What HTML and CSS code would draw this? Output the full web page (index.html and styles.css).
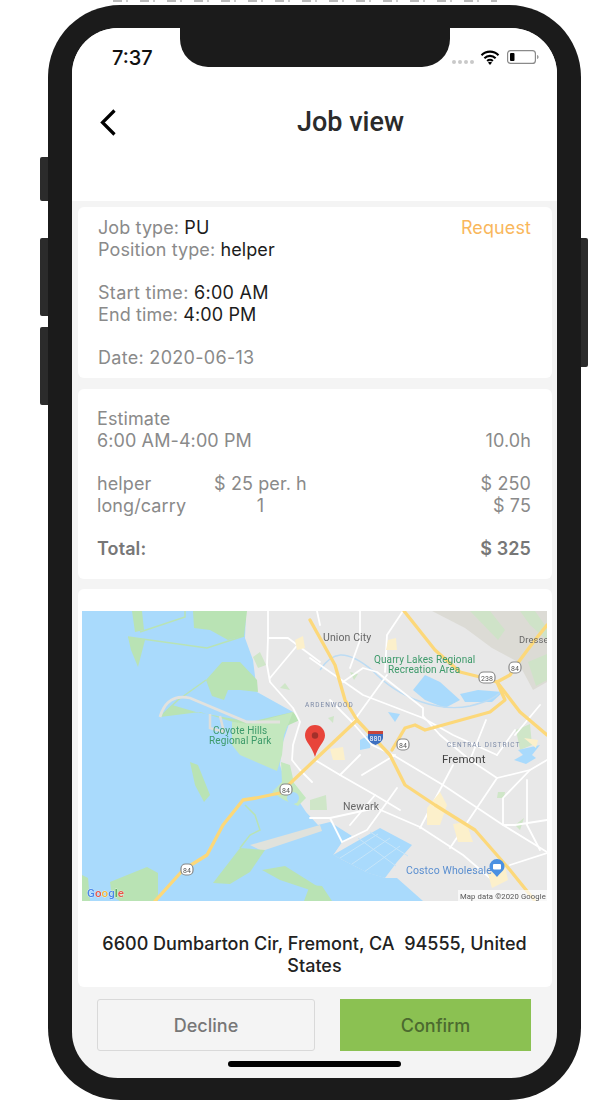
FILE: index.html
```html
<!DOCTYPE html>
<html lang="en">
<head>
<meta charset="utf-8">
<title>Job view</title>
<link rel="stylesheet" href="styles.css">
</head>
<body>
<div class="strip"></div>
<div class="device">
  <span class="side side-mute"></span>
  <span class="side side-up"></span>
  <span class="side side-down"></span>
  <span class="side side-power"></span>
  <div class="notch"></div>
  <div class="screen">
    <header class="top">
      <div class="status">
        <span class="time">7:37</span>
        <div class="status-icons">
          <span class="dots"><i></i><i></i><i></i><i></i></span>
          <svg class="wifi" width="20" height="15" viewBox="0 0 20 15"><path d="M1.500 5.200a12 12 0 0 1 17 0M4.400 8.200a8 8 0 0 1 11.200 0M7.200 11a4 4 0 0 1 5.600 0" fill="none" stroke="#000" stroke-width="2.100"/><path d="M10 15l-2-2.400a3 3 0 0 1 4 0z" fill="#000"/></svg>
          <svg class="battery" width="32" height="14" viewBox="0 0 32 14"><rect x=".6" y=".6" width="27.800" height="12.800" rx="3" fill="none" stroke="#8a8a8a" stroke-width="1.200"/><rect x="3" y="3" width="4.500" height="8" rx="1" fill="#000"/><path d="M30 5v4c1-.3 1.600-1 1.600-2s-.6-1.700-1.600-2z" fill="#999"/></svg>
        </div>
      </div>
      <div class="nav">
        <svg class="back" width="16" height="27" viewBox="0 0 16 27"><path d="M14.500 1.500L2.500 13.500l12 12" fill="none" stroke="#000" stroke-width="3.200"/></svg>
        <h1 class="title">Job view</h1>
      </div>
    </header>

    <section class="card card-job">
      <div class="job-head">
        <div class="lines">
          <div>Job type: <b>PU</b></div>
          <div>Position type: <b>helper</b></div>
        </div>
        <span class="state">Request</span>
      </div>
      <div class="lines">
        <div class="wide">Start time: <b>6:00 AM</b></div>
        <div>End time: <b>4:00 PM</b></div>
      </div>
      <div class="lines">
        <div class="wide">Date: 2020-06-13</div>
      </div>
    </section>

    <section class="card card-est">
      <div class="lines">Estimate</div>
      <div class="row row-mb"><span>6:00 AM-4:00 PM</span><span>10.0h</span></div>
      <div class="grid"><span>helper</span><span class="mid">$ 25 per. h</span><span class="end">$ 250</span></div>
      <div class="grid grid-mb"><span>long/carry</span><span class="mid">1</span><span class="end">$ 75</span></div>
      <div class="row total"><span>Total:</span><span>$ 325</span></div>
    </section>

    <section class="card card-map">
      <svg class="map" width="465" height="290" viewBox="82 611 465 290" font-family="Roboto, sans-serif">
        <rect x="82" y="611" width="465" height="290" fill="#a9dafc"/>
        <!-- land -->
        <path d="M246 611H547V901H423L397 878 385 878 368 873 333 855 342 842 352 836 330 822 318 825 306 812 298 800 288 790 280 765 282 745 293 712 257 692 253 660 245 638Z" fill="#e8e8e8"/>
        <path d="M250 845L320 825 322 831 262 851Z" fill="#e0e2dc"/>
        <!-- salt ponds -->
        <path d="M333 855L380 828 412 845 397 862 385 878 368 873Z" fill="#a9dafc"/>
        <path d="M340 858L378 834M352 864L390 838M364 872L400 846M358 838L396 866M370 832L408 856" stroke="#c6e5f9" stroke-width="1" fill="none"/>
        <path d="M310 840L330 838 342 842 333 855 345 862 368 873 385 878 340 880 310 878Z" fill="#a9dafc"/>
        <path d="M310 885L322 886 332 901H304Z" fill="#b9e3b4"/>
        <!-- hills -->
        <path d="M432 611H547V682L533 690 518 662 492 648 465 628Z" fill="#dcdbd5"/>
        <path d="M470 611H490L505 630 498 640ZM520 611H535L547 628V640L530 625ZM528 662L547 654V680L536 686Z" fill="#cfe3c8"/>
        <!-- marsh -->
        <g fill="#b9e3b4">
          <path d="M132 611H142L144 630 135 632Z"/>
          <path d="M128 637L145 640 138 667 131 650Z"/>
          <path d="M193 611H247L244 636 228 640 210 630 194 628Z"/>
          <path d="M206 680L222 662 240 662 257 680 258 692 240 690 228 690 224 700 212 696Z"/>
          <path d="M160 717L172 705 196 712 250 722 293 712 300 720 282 728 240 724 200 712Z"/>
          <path d="M190 762L198 765 210 795 204 802 195 785Z"/>
          <path d="M110 882L147 867 158 873V901H120L112 896Z"/>
          <path d="M82 875L88 878 90 901H82Z"/>
          <path d="M213 883L240 848 265 850 250 872 230 884Z"/>
          <path d="M262 870L285 866 320 888 316 892 280 880Z"/>
        </g>
        <g fill="none" stroke="#b9e3b4" stroke-width="1.500">
          <path d="M140 632L185 617V611M128 637L207 648 244 636"/>
          <path d="M206 680L178 700 160 717"/>
          <path d="M240 848L250 835 260 830 255 815 245 805"/>
        </g>
        <path d="M232 722L250 724 293 712 284 735 282 755 277 771 240 755 232 745Z" fill="#c4e8bf"/>
        <path d="M160 717C165 700 175 695 190 698L247 722 280 722" fill="none" stroke="#e2e2de" stroke-width="2.800"/>
        <path d="M210 714V728L224 732 220 716" fill="none" stroke="#dededa" stroke-width="2.500"/>
        <path d="M281 762L290 765 294 783 306 798 298 806 284 800 272 792 282 782Z" fill="#c4e8bf"/>
        <circle cx="293" cy="798" r="6" fill="#a9dafc"/>
        <!-- land parks -->
        <g fill="#cfe6c8">
          <path d="M253 657L260 652 266 665 258 668Z"/>
          <path d="M280 688L285 683 290 690Z"/>
          <path d="M310 800L326 795 327 810 310 810Z"/>
          <path d="M328 718L334 716 333 723Z"/>
          <path d="M350 672L358 674 354 680Z"/>
          <path d="M515 825L524 818 520 830ZM498 792L505 792 504 798 497 798Z"/>
          <path d="M516 730L530 724 532 745 520 750Z"/>
        </g>
        <!-- lakes -->
        <g fill="#a9dafc">
          <path d="M413 690L425 675 440 682 460 700 445 708 425 700Z"/>
          <path d="M460 694L478 690 503 692 492 702 465 702Z"/>
          <path d="M518 750L540 745 528 760Z"/>
          <path d="M360 740L372 733 370 748 360 750Z"/>
          <path d="M388 712L400 714 395 722Z"/>
          <path d="M514 760L528 752 536 758 526 764Z"/>
        </g>
        <!-- water lines -->
        <path d="M320 670C332 652 345 648 372 670 400 700 440 712 470 706 486 702 496 698 502 690" fill="none" stroke="#bcdcf4" stroke-width="1.400"/>
        <!-- white roads -->
        <g fill="none" stroke="#fff" stroke-width="1.800" stroke-linecap="round" stroke-linejoin="round">
          <path d="M268 611V638L267 665 270 682 293 708 300 722 293 745 292 760 300 770 312 782"/>
          <path d="M300 642L270 678M268 638H288L320 662"/>
          <path d="M310 658L363 695 423 718 453 735 497 755"/>
          <path d="M403 611L387 635 385 672M387 675L353 722"/>
          <path d="M343 682L363 668 377 672 423 708 423 716"/>
          <path d="M317 611L320 625M360 611V640L350 668"/>
          <path d="M393 755L443 785 503 825 547 852"/>
          <path d="M330 818L342 842 367 830 380 812 397 788"/>
          <path d="M310 818L330 818 376 808M376 808L420 827 463 855 490 878"/>
          <path d="M453 765L420 828M497 778L450 848"/>
          <path d="M503 825L515 825 547 820M503 825V798L530 770M527 780V825L540 850"/>
          <path d="M510 865L547 853M362 775L395 755M340 775L375 795 400 810"/>
          <path d="M360 755L340 775 315 760M375 795L350 825"/>
          <path d="M423 716L440 735 470 760 497 778 530 770 547 760"/>
          <path d="M486 720L470 760M515 730L497 755M540 705L515 735"/>
          <path d="M330 700L352 722 372 745 393 755"/>
        </g>
        <!-- urban -->
        <path d="M330 749L343 747 345 760 333 760ZM388 640L396 638 397 650 386 650ZM427 808L440 792 447 805 440 825 427 825ZM453 824L466 822 473 842 458 842ZM488 874L505 866 508 880 492 888ZM295 640L303 636 305 648 297 650ZM524 738L538 740 536 748Z" fill="#fcf0cb"/>
        <!-- yellow highways -->
        <g fill="none" stroke="#fcd87a" stroke-width="3.300" stroke-linecap="round" stroke-linejoin="round">
          <path d="M155 901L183 870 207 855 223 825 243 800 256 798 280 793 320 755 357 720"/>
          <path d="M310 620L335 665 345 700 357 720 390 755 405 785 435 805 475 830 510 870 535 901"/>
          <path d="M404 611L435 650 460 672 480 677 497 682 520 712 547 735"/>
          <path d="M497 682L510 675 520 660 535 640 547 625"/>
          <path d="M392 750L405 728 415 725 425 730 490 712 505 700 497 682"/>
        </g>
        <!-- shields -->
        <g fill="#fff" stroke="#888" stroke-width="1.200">
          <rect x="280" y="784" width="12" height="11" rx="4.500"/>
          <rect x="181" y="864" width="12" height="11" rx="4.500"/>
          <rect x="397" y="739" width="12" height="11" rx="4.500"/>
          <rect x="509" y="662" width="12" height="11" rx="4.500"/>
          <rect x="479" y="672" width="16" height="11" rx="4.500"/>
        </g>
        <g fill="#555" font-size="7" text-anchor="middle">
          <text x="286" y="792.500">84</text>
          <text x="187" y="872.500">84</text>
          <text x="403" y="747.500">84</text>
          <text x="515" y="670.500">84</text>
          <text x="487" y="680.500">238</text>
        </g>
        <path d="M368 731H383V738C382 742 378 744 375.500 745 373 744 369 742 368 738Z" fill="#3d6fc0"/>
        <path d="M368 731H383V734H368Z" fill="#c8453a"/>
        <text x="375.500" y="741" text-anchor="middle" font-size="7" fill="#fff">880</text>
        <!-- labels -->
        <g fill="#666" font-size="10.500">
          <text x="323" y="641">Union City</text>
          <text x="343" y="810">Newark</text>
        </g>
        <text x="519" y="643" fill="#666" font-size="9.400">Dresse</text>
        <text x="442" y="763" fill="#444" font-size="11.500">Fremont</text>
        <g fill="#3d9a6a" font-size="10">
          <text x="374" y="663">Quarry Lakes Regional</text>
          <text x="388" y="673">Recreation Area</text>
          <text x="213" y="734">Coyote Hills</text>
          <text x="209" y="744">Regional Park</text>
        </g>
        <g fill="#7c8aa6" font-size="6.500" letter-spacing="1">
          <text x="305" y="707">ARDENWOOD</text>
          <text x="447" y="747">CENTRAL DISTRICT</text>
        </g>
        <text x="406" y="874" fill="#5b8fd0" font-size="10.500">Costco Wholesale</text>
        <path d="M497 859a7.500 7.500 0 0 1 7.500 7.500c0 4-4 6-7.500 10.500-3.500-4.500-7.500-6.500-7.500-10.500a7.500 7.500 0 0 1 7.500-7.500z" fill="#4a90e2"/>
        <rect x="493" y="864" width="8" height="5.500" rx="1" fill="#fff"/>
        <!-- attribution -->
        <rect x="458" y="890" width="89" height="11" fill="#fff" opacity=".7"/>
        <text x="460" y="899" fill="#555" font-size="7.700">Map data ©2020 Google</text>
        <g font-size="11.500" font-weight="500" stroke="#fff" stroke-width=".4" paint-order="stroke">
          <text x="87" y="897"><tspan fill="#4a86e8">G</tspan><tspan fill="#e8564a">o</tspan><tspan fill="#f3b73b">o</tspan><tspan fill="#4a86e8">g</tspan><tspan fill="#52a85a">l</tspan><tspan fill="#e8564a">e</tspan></text>
        </g>
        <!-- pin -->
        <path d="M315 725C321 725 325 730 325 735.500 325 742 318 746 315 757 312 746 305 742 305 735.500 305 730 309 725 315 725Z" fill="#e8443a"/>
        <circle cx="315" cy="735.500" r="3.200" fill="#a3302a"/>
      </svg>
      <p class="address">6600 Dumbarton Cir, Fremont, CA&nbsp; 94555, United States</p>
    </section>

    <div class="actions">
      <button class="btn btn-decline" type="button">Decline</button>
      <button class="btn btn-confirm" type="button">Confirm</button>
    </div>
    <div class="home"><span></span></div>
  </div>
</div>
</body>
</html>
```

FILE: styles.css
```css
* { box-sizing: border-box; }
html, body { margin: 0; padding: 0; background: #fff; height: 1104px; overflow: hidden; }
body { font-family: Inter, "Liberation Sans", sans-serif; color: #1c1c1c; }

.strip {
  position: absolute; left: 113px; top: 0; width: 384px; height: 2px;
  background: repeating-linear-gradient(90deg, #bbb 0 9px, #fff 9px 13px, #ccc 13px 15px, #fff 15px 27px);
}

.device {
  position: relative;
  width: 533px; height: 1095px;
  margin: 5px 0 0 48px;
  padding: 23px 24px 22px 24px;
  background: #1b1b1b;
  border-radius: 72px;
}
.side { position: absolute; width: 8px; background: #2b2b2b; border-radius: 2px 0 0 2px; left: -8px; }
.side-mute { top: 152px; height: 44px; }
.side-up { top: 233px; height: 78px; }
.side-down { top: 322px; height: 78px; }
.side-power { left: auto; right: -7px; width: 7px; top: 233px; height: 129px; border-radius: 0 2px 2px 0; }

.notch {
  position: absolute; left: 132px; top: 20px;
  width: 270px; height: 42px;
  background: #1b1b1b;
  border-radius: 0 0 28px 28px;
  z-index: 2;
}

.screen {
  height: 100%;
  background: #f4f4f4;
  border-radius: 46px;
  overflow: hidden;
  display: flex; flex-direction: column;
}

.top { background: #fff; height: 173px; flex: none; }
.status {
  display: flex; justify-content: space-between; align-items: flex-start;
  padding: 18px 18px 0 40px;
  height: 74px;
}
.time { font: 500 20px/24px Inter, sans-serif; color: #111; }
.status-icons { display: flex; align-items: flex-start; gap: 6px; padding-top: 4px; }
.dots { display: flex; gap: 2px; margin-top: 10px; }
.dots i { width: 4px; height: 4px; background: #c9c9c9; border-radius: 50%; }
.wifi { margin-right: 1px; }

.nav { display: flex; align-items: center; padding-left: 28px; height: 40px; }
.back { flex: none; }
.title { flex: 1; margin: 0 0 0 28px; text-align: center; font: 500 27px/40px Roboto, sans-serif; color: #2b2b2b; }

.card { background: #fff; border-radius: 6px; margin: 0 5px 0 6px; flex: none; font-size: 18px; line-height: 22px; color: #8a8a8a; letter-spacing: .1px; }
.card b { font-weight: 400; color: #1c1c1c; }
.wide { letter-spacing: .3px; }

.card-job { margin-top: 6px; height: 171px; padding: 10px 21px 0 20px; }
.lines + .lines { margin-top: 21px; }
.job-head { display: flex; justify-content: space-between; margin-bottom: 21px; }
.state { color: #f9b75c; }

.card-est { margin-top: 11px; height: 190px; padding: 19px 21px 0 19px; }
.row { display: flex; justify-content: space-between; }
.row-mb { margin-bottom: 21px; }
.grid { display: grid; grid-template-columns: 117px 93px 1fr; }
.grid-mb { margin-bottom: 21px; }
.mid { text-align: center; }
.end { text-align: right; }
.total { font-weight: 600; color: #777; }

.card-map { margin-top: 10px; height: 398px; padding: 22px 5px 0 4px; }
.map { display: block; filter: blur(.6px); }
.address { margin: 32px 20px 0; text-align: center; font-weight: 500; line-height: 22px; color: #222; font-size: 18px; letter-spacing: 0; }

.actions { display: flex; justify-content: space-between; padding: 12px 26px 0 25px; flex: none; }
.btn { height: 52px; font: 500 18px Inter, sans-serif; border-radius: 0; padding: 0; }
.btn-decline { width: 218px; background: #f4f4f4; border: 1px solid #d9d9d9; border-radius: 3px; color: #777; }
.btn-confirm { width: 191px; background: #8bc152; border: 0; color: #4b6a2f; }

.home { display: flex; justify-content: center; padding-top: 10px; }
.home span { width: 173px; height: 6px; border-radius: 3px; background: #000; }
```
